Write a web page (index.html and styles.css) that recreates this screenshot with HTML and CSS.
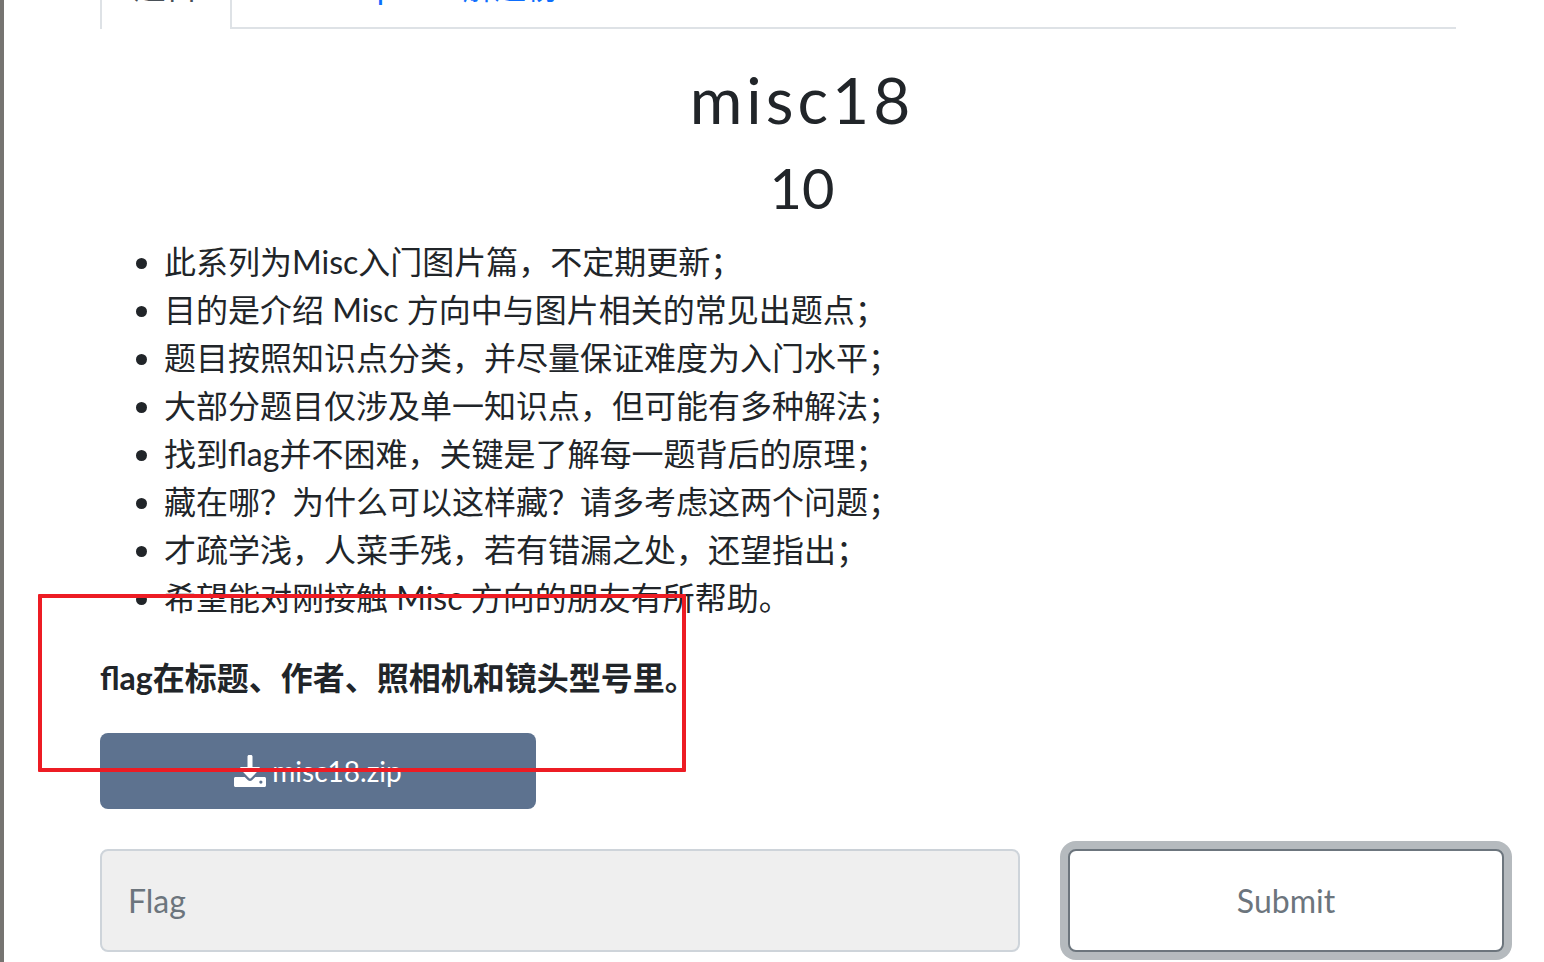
FILE: index.html
```html
<!DOCTYPE html>
<html lang="zh-CN">

<head>
    <meta charset="UTF-8">
    <meta name="viewport" content="width=device-width, initial-scale=1.0">
    <title>misc18</title>
    <link rel="stylesheet" href="styles.css">
</head>

<body>
    <main class="challenge">
        <nav class="tabs">
            <a class="tab active" href="#challenge">题目</a>
            <a class="tab" href="#writeup">Write Up</a>
            <a class="tab" href="#solves">解题榜</a>
        </nav>

        <h2 class="name">misc18</h2>
        <h3 class="value">10</h3>

        <div class="desc">
            <ul>
                <li>此系列为Misc入门图片篇，不定期更新；</li>
                <li>目的是介绍 Misc 方向中与图片相关的常见出题点；</li>
                <li>题目按照知识点分类，并尽量保证难度为入门水平；</li>
                <li>大部分题目仅涉及单一知识点，但可能有多种解法；</li>
                <li>找到flag并不困难，关键是了解每一题背后的原理；</li>
                <li>藏在哪？为什么可以这样藏？请多考虑这两个问题；</li>
                <li>才疏学浅，人菜手残，若有错漏之处，还望指出；</li>
                <li>希望能对刚接触 Misc 方向的朋友有所帮助。</li>
            </ul>
            <p><strong>flag在标题、作者、照相机和镜头型号里。</strong></p>
            <div class="mark"></div>
        </div>

        <div class="row">
            <a class="file" href="#misc18.zip">
                <svg viewBox="0 0 512 512" aria-hidden="true">
                    <path d="M240 0h32c13 0 24 11 24 24v168h100c18 0 27 21 14 34L270 372c-7 7-20 7-27 0L102 226c-13-13-4-34 14-34h100V24c0-13 11-24 24-24z" />
                    <path fill-rule="evenodd" d="M512 376v112c0 13-11 24-24 24H24c-13 0-24-11-24-24V376c0-13 11-24 24-24h147l49 49c20 20 52 20 72 0l49-49h147c13 0 24 11 24 24zM456 432a26 26 0 1 0-52 0 26 26 0 0 0 52 0z" />
                </svg>
                misc18.zip
            </a>
        </div>

        <form class="row">
            <input class="flag" type="text" placeholder="Flag" aria-label="Flag">
            <button class="submit" type="button">Submit</button>
        </form>
    </main>
</body>

</html>
```

FILE: styles.css
```css
* {
    box-sizing: border-box;
    margin: 0;
    padding: 0;
}

body {
    border-left: 4px solid #767471;
    background-color: #fff;
    color: #212529;
    font-family: Lato, "Noto Sans CJK SC", sans-serif;
    font-size: 32px;
    line-height: 48px;
    overflow: hidden;
}

a {
    text-decoration: none;
}

.challenge {
    padding: 0 40px 10px 96px;
}

/* only the lower edge of the tabs is in view */
.tabs {
    display: flex;
    align-items: flex-end;
    height: 29px;
    margin-right: 48px;
    border-bottom: 2px solid #dee2e6;
}

.tab {
    padding: 16px 32px;
    border: 2px solid transparent;
    border-bottom: 0;
    color: #0d6efd;
}

.tab.active {
    margin-bottom: -2px;
    padding-bottom: 18px;
    border-color: #dee2e6;
    background-color: #fff;
    color: #495057;
}

.name,
.value {
    font-weight: 400;
    text-align: center;
}

.name {
    margin-top: 32px;
    font-size: 64px;
    line-height: 77px;
    letter-spacing: 4px;
}

.value {
    margin: 16px 0;
    font-size: 56px;
    line-height: 68px;
}

.desc {
    position: relative;
}

.desc ul {
    padding-left: 64px;
    margin-bottom: 32px;
}

.desc p {
    margin-bottom: 31px;
}

.mark {
    position: absolute;
    top: 356px;
    left: -62px;
    width: 648px;
    height: 178px;
    border: 4px solid #ed1c24;
    border-radius: 1px;
}

.row {
    display: grid;
    grid-template-columns: repeat(12, 1fr);
    gap: 48px;
    margin-bottom: 40px;
}

.file {
    grid-column: span 4;
    display: flex;
    justify-content: center;
    align-items: center;
    gap: 6px;
    height: 76px;
    border-radius: 8px;
    background-color: #5d728f;
    color: #fff;
    font-size: 28px;
}

.file svg {
    width: 32px;
    height: 32px;
    fill: #fff;
}

.flag,
.submit {
    height: 103px;
    border-radius: 8px;
    font: inherit;
}

.flag {
    grid-column: span 8;
    min-width: 0;
    padding: 0 26px;
    border: 2px solid #ced4da;
    background-color: #efefef;
}

.flag::placeholder {
    color: #6c757d;
}

.submit {
    grid-column: span 4;
    border: 2px solid #6c757d;
    background-color: #fff;
    box-shadow: 0 0 0 8px #b5babe;
    color: #6c757d;
}
```
